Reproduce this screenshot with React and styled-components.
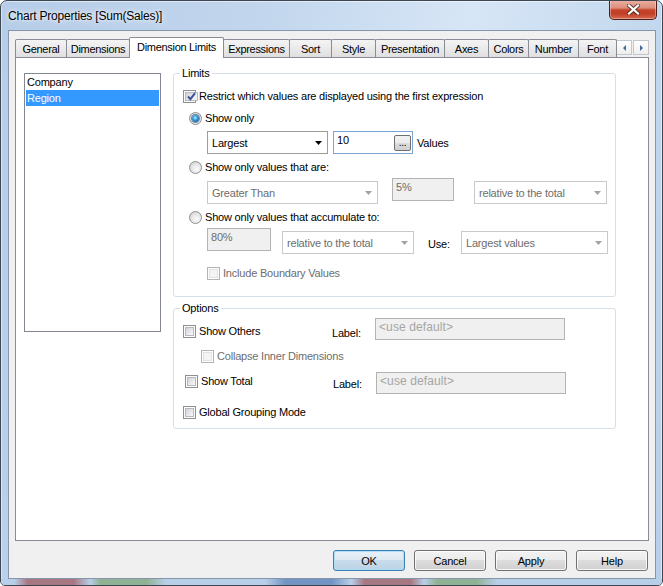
import React from "react";
import styled, { createGlobalStyle } from "styled-components";

const GlobalStyle = createGlobalStyle`
	* { box-sizing: border-box; }
	html, body { margin: 0; padding: 0; background: #ffffff; }
	body {
		font-family: "Liberation Sans", Arial, sans-serif;
		font-size: 11px;
		color: #000;
	}
`;

const TABS = [
	{ label: "General", width: 52 },
	{ label: "Dimensions", width: 64 },
	{ label: "Dimension Limits", width: 95, active: true },
	{ label: "Expressions", width: 67 },
	{ label: "Sort", width: 43 },
	{ label: "Style", width: 45 },
	{ label: "Presentation", width: 70 },
	{ label: "Axes", width: 45 },
	{ label: "Colors", width: 41 },
	{ label: "Number", width: 51 },
	{ label: "Font", width: 39 },
];

const DIMENSIONS = ["Company", "Region"];

const BUTTONS = ["OK", "Cancel", "Apply", "Help"];

function Check({ checked, disabled, children }) {
	return (
		<CheckLine $disabled={disabled}>
			<CheckBox $disabled={disabled}>
				<CheckInner $disabled={disabled}>
					{checked && (
						<svg width="11" height="11" viewBox="0 0 11 11">
							<path
								d="M2 5.5 L4.4 8.2 L9 2.2"
								fill="none"
								stroke="#3b4f9a"
								strokeWidth="1.9"
							/>
						</svg>
					)}
				</CheckInner>
			</CheckBox>
			<span>{children}</span>
		</CheckLine>
	);
}

function Radio({ selected, children }) {
	return (
		<RadioLine>
			<RadioCircle>{selected && <RadioDot />}</RadioCircle>
			<span>{children}</span>
		</RadioLine>
	);
}

function Combo({ value, width, disabled, drop = 3 }) {
	return (
		<ComboBox $w={width} $disabled={disabled} $drop={drop}>
			<span>{value}</span>
			<svg width="7" height="4" viewBox="0 0 7 4">
				<path d="M0 0 H7 L3.5 4 Z" fill={disabled ? "#a3a3a3" : "#000"} />
			</svg>
		</ComboBox>
	);
}

function LabelOption({ label, shift }) {
	return (
		<LabelledOption $shift={shift}>
			<CheckCell $shift={shift}>
				<Check>{label}</Check>
			</CheckCell>
			<FieldLabel $shift={shift}>Label:</FieldLabel>
			<DefaultBox>&lt;use default&gt;</DefaultBox>
		</LabelledOption>
	);
}

function CloseGlyph() {
	return (
		<svg width="13" height="11" viewBox="0 0 13 11">
			<path
				d="M2 1.5 L11 9.5 M11 1.5 L2 9.5"
				stroke="#43261f"
				strokeWidth="4"
				strokeLinecap="square"
				opacity="0.8"
			/>
			<path
				d="M2 1.5 L11 9.5 M11 1.5 L2 9.5"
				stroke="#ffffff"
				strokeWidth="2.2"
				strokeLinecap="square"
			/>
		</svg>
	);
}

function App() {
	return (
		<>
			<GlobalStyle />
			<Window>
				<TitleBar>
					<Title>Chart Properties [Sum(Sales)]</Title>
					<CloseButton>
						<CloseGlyph />
					</CloseButton>
				</TitleBar>

				<Client>
					<TabStrip>
						{TABS.map(tab => (
							<Tab key={tab.label} $w={tab.width} $active={tab.active}>
								{tab.label}
							</Tab>
						))}
						<ScrollArrows>
							<ArrowButton>
								<svg width="3" height="6" viewBox="0 0 3 6">
									<path d="M3 0 V6 L0 3 Z" fill="#41679b" />
								</svg>
							</ArrowButton>
							<ArrowButton>
								<svg width="3" height="6" viewBox="0 0 3 6">
									<path d="M0 0 V6 L3 3 Z" fill="#41679b" />
								</svg>
							</ArrowButton>
						</ScrollArrows>
					</TabStrip>

					<Panel>
						<DimensionList>
							{DIMENSIONS.map(name => (
								<ListItem key={name} $selected={name === "Region"}>
									{name}
								</ListItem>
							))}
						</DimensionList>

						<RightColumn>
							<LimitsGroup>
								<Legend>Limits</Legend>
								<LimitsBody>
									<Check checked>
										Restrict which values are displayed using the first expression
									</Check>
									<ChoiceList>
										<Choice>
											<Radio selected>Show only</Radio>
											<ChoiceControls>
												<Combo value="Largest" width={121} drop={2} />
												<ValueBox>
													<span>10</span>
													<EllipsisButton>...</EllipsisButton>
												</ValueBox>
												<Caption>Values</Caption>
											</ChoiceControls>
										</Choice>
										<Choice>
											<Radio>Show only values that are:</Radio>
											<ChoiceControls>
												<Combo value="Greater Than" width={171} disabled />
												<PercentBox $w={62}>5%</PercentBox>
												<Combo
													value="relative to the total"
													width={133}
													disabled
												/>
											</ChoiceControls>
										</Choice>
										<Choice>
											<Radio>Show only values that accumulate to:</Radio>
											<ChoiceControls>
												<PercentBox $w={64}>80%</PercentBox>
												<Combo
													value="relative to the total"
													width={132}
													disabled
												/>
												<UseLabel>Use:</UseLabel>
												<Combo value="Largest values" width={147} disabled />
											</ChoiceControls>
										</Choice>
										<BoundaryLine>
											<Check disabled>Include Boundary Values</Check>
										</BoundaryLine>
									</ChoiceList>
								</LimitsBody>
							</LimitsGroup>

							<OptionsGroup>
								<Legend>Options</Legend>
								<OptionsBody>
									<LabelOption label="Show Others" />
									<SubOption>
										<Check disabled>Collapse Inner Dimensions</Check>
									</SubOption>
									<LabelOption label="Show Total" shift />
									<GroupingOption>
										<Check>Global Grouping Mode</Check>
									</GroupingOption>
								</OptionsBody>
							</OptionsGroup>
						</RightColumn>
					</Panel>

					<ButtonRow>
						{BUTTONS.map(label => (
							<Button key={label} $default={label === "OK"}>
								{label}
							</Button>
						))}
					</ButtonRow>
				</Client>

				<BottomFrame />
			</Window>
		</>
	);
}

export default App;

const Window = styled.div`
	width: 663px;
	height: 586px;
	display: flex;
	flex-direction: column;
	border: 1px solid #3e4652;
	border-radius: 7px 7px 5px 5px;
	overflow: hidden;
	background: linear-gradient(
		100deg,
		#b6cde8 0%,
		#c2d6ed 35%,
		#d7e6f6 62%,
		#c6daef 82%,
		#b8cfe9 100%
	);
	box-shadow: inset 0 0 0 1px rgba(255, 255, 255, 0.5);
`;

const TitleBar = styled.div`
	height: 29px;
	flex: none;
	display: flex;
	align-items: center;
	padding-left: 7px;
`;

const Title = styled.div`
	font-size: 12px;
	letter-spacing: -0.2px;
	color: #000;
	text-shadow: 0 0 6px rgba(255, 255, 255, 0.9), 0 0 3px rgba(255, 255, 255, 0.8);
`;

const CloseButton = styled.div`
	align-self: flex-start;
	margin: -1px 5px 0 auto;
	width: 48px;
	height: 20px;
	border: 1px solid #4d1f18;
	border-top: none;
	border-radius: 0 0 5px 5px;
	background: linear-gradient(
		#ebb3a6 0%,
		#de8d7a 42%,
		#c7442b 52%,
		#c03f27 72%,
		#d9694e 100%
	);
	box-shadow: inset 0 0 0 1px rgba(255, 255, 255, 0.35);
	display: flex;
	align-items: center;
	justify-content: center;
`;

const Client = styled.div`
	flex: none;
	height: 549px;
	margin: 0 6px 0 7px;
	border: 1px solid #8596aa;
	background: #f0f0f0;
	display: flex;
	flex-direction: column;
`;

const TabStrip = styled.div`
	height: 20px;
	margin: 6px 6px 0 6px;
	display: flex;
	align-items: flex-end;
`;

const Tab = styled.div`
	width: ${p => p.$w}px;
	height: ${p => (p.$active ? 21 : 18)}px;
	margin-right: -1px;
	margin-bottom: ${p => (p.$active ? -1 : 0)}px;
	position: relative;
	z-index: ${p => (p.$active ? 2 : 1)};
	border: 1px solid #898c95;
	border-bottom: none;
	border-radius: 2px 2px 0 0;
	background: ${p =>
		p.$active ? "#ffffff" : "linear-gradient(#f4f4f4, #e9e9e9 55%, #dfdfdf)"};
	display: flex;
	align-items: center;
	justify-content: center;
	padding-bottom: ${p => (p.$active ? 3 : 0)}px;
	letter-spacing: -0.3px;
	white-space: nowrap;
`;

const ScrollArrows = styled.div`
	margin: 0 0 2px auto;
	display: flex;
	gap: 1px;
`;

const ArrowButton = styled.div`
	width: 16px;
	height: 15px;
	border: 1px solid #c3c6cc;
	background: linear-gradient(#ffffff, #eeeeee);
	display: flex;
	align-items: center;
	justify-content: center;
`;

const Panel = styled.div`
	height: 484px;
	margin: 0 6px;
	border: 1px solid #898c95;
	background: #ffffff;
	display: flex;
	align-items: flex-start;
	gap: 12px;
	padding: 9px 0 0 8px;
`;

const DimensionList = styled.div`
	width: 137px;
	height: 259px;
	margin-top: 6px;
	border: 1px solid #828790;
	padding: 0 1px;
`;

const ListItem = styled.div`
	height: 16px;
	line-height: 16px;
	padding-left: 1px;
	letter-spacing: -0.2px;
	color: ${p => (p.$selected ? "#ffffff" : "#000000")};
	background: ${p => (p.$selected ? "#3399ff" : "transparent")};
`;

const RightColumn = styled.div`
	width: 443px;
	display: flex;
	flex-direction: column;
	gap: 5px;
`;

const GroupBox = styled.fieldset`
	margin: 0;
	padding: 0;
	min-width: 0;
	border: 1px solid #d5dfe5;
	border-radius: 3px;
`;

const LimitsGroup = styled(GroupBox)`
	height: 230px;
`;

const OptionsGroup = styled(GroupBox)`
	height: 127px;
`;

const Legend = styled.legend`
	margin-left: 6px;
	padding: 0 2px;
	line-height: 13px;
	letter-spacing: -0.2px;
`;

const LimitsBody = styled.div`
	padding: 10px 0 0 9px;
	display: flex;
	flex-direction: column;
	align-items: flex-start;
	gap: 9px;
`;

const ChoiceList = styled.div`
	margin-left: 6px;
	display: flex;
	flex-direction: column;
	align-items: flex-start;
	gap: 7px;
`;

const ChoiceControls = styled.div`
	height: 26px;
	margin-left: 18px;
	display: flex;
	align-items: flex-start;
`;

const Choice = styled.div`
	display: flex;
	flex-direction: column;
	align-items: flex-start;
	gap: 4px;

	&:first-child ${ChoiceControls} {
		height: 25px;
	}
`;

const BoundaryLine = styled.div`
	margin: 6px 0 0 18px;
`;

const CheckLine = styled.div`
	height: 13px;
	display: flex;
	align-items: center;
	gap: 3px;
	line-height: 13px;
	letter-spacing: -0.2px;
	white-space: nowrap;
	color: ${p => (p.$disabled ? "#6d6d6d" : "#000")};
`;

const CheckBox = styled.span`
	width: 13px;
	height: 13px;
	flex: none;
	border: 1px solid ${p => (p.$disabled ? "#b4b4b4" : "#8e8f8f")};
	background: #fdfdfd;
	padding: 1px;
	display: flex;
`;

const CheckInner = styled.span`
	flex: 1;
	border: 1px solid ${p => (p.$disabled ? "#e2e2e2" : "#b6b9bd")};
	background: ${p =>
		p.$disabled
			? "#f4f4f4"
			: "linear-gradient(135deg, #d0d3d8 0%, #e6e7e9 50%, #f8f8f8 100%)"};
	display: flex;
	align-items: center;
	justify-content: center;

	svg {
		flex: none;
	}
`;

const RadioLine = styled.div`
	height: 13px;
	display: flex;
	align-items: center;
	gap: 3px;
	line-height: 13px;
	letter-spacing: -0.2px;
	white-space: nowrap;
`;

const RadioCircle = styled.span`
	width: 13px;
	height: 13px;
	flex: none;
	border-radius: 50%;
	border: 1px solid #8e8f8f;
	background: radial-gradient(
		circle at 60% 65%,
		#fbfbfb 0%,
		#e8e8e8 45%,
		#cacaca 100%
	);
	display: flex;
	align-items: center;
	justify-content: center;
`;

const RadioDot = styled.span`
	width: 7px;
	height: 7px;
	border-radius: 50%;
	background: radial-gradient(
		circle at 45% 40%,
		#c4f0ff 0%,
		#3aa8e4 35%,
		#17579a 80%,
		#153c6b 100%
	);
	box-shadow: 0 0 0 1px rgba(30, 70, 120, 0.6);
`;

const ComboBox = styled.div`
	width: ${p => p.$w}px;
	height: 23px;
	flex: none;
	margin-top: ${p => p.$drop}px;
	border: 1px solid ${p => (p.$disabled ? "#c9c9c9" : "#9d9d9d")};
	background: #ffffff;
	display: flex;
	align-items: center;
	justify-content: space-between;
	padding: 0 5px 0 4px;
	color: ${p => (p.$disabled ? "#6d6d6d" : "#000")};
	letter-spacing: -0.2px;
	white-space: nowrap;
`;

const TextField = styled.div`
	height: 23px;
	flex: none;
	border: 1px solid #b3b3b3;
	background: #f0f0f0;
	color: #6d6d6d;
	padding: 2px 1px 0 3px;
	line-height: 13px;
	letter-spacing: -0.2px;
	white-space: nowrap;
`;

const ValueBox = styled(TextField)`
	width: 80px;
	margin: 2px 0 0 5px;
	border-color: #7ea6d3;
	background: #ffffff;
	color: #000;
	display: flex;
	align-items: flex-start;
	justify-content: space-between;
`;

const PercentBox = styled(TextField)`
	width: ${p => p.$w}px;

	${ComboBox} + & {
		margin-left: 14px;
	}

	& + ${ComboBox} {
		margin-left: 11px;
	}

	${ComboBox} + & + ${ComboBox} {
		margin-left: 20px;
	}
`;

const DefaultBox = styled(TextField)`
	width: 190px;
	height: 22px;
	color: #a5a5a5;
	font-size: 12px;
	letter-spacing: 0.1px;
`;

const EllipsisButton = styled.div`
	width: 17px;
	height: 16px;
	margin-top: 1px;
	border: 1px solid #707070;
	border-radius: 2px;
	background: linear-gradient(#f2f2f2 0%, #ebebeb 50%, #dddddd 50%, #cfcfcf 100%);
	display: flex;
	align-items: flex-end;
	justify-content: center;
	padding-bottom: 2px;
	font-size: 10px;
	line-height: 10px;
	color: #000;
`;

const Caption = styled.span`
	margin: 8px 0 0 4px;
	line-height: 13px;
	letter-spacing: -0.2px;
`;

const UseLabel = styled.span`
	width: 33px;
	margin: 10px 0 0 14px;
	line-height: 13px;
	letter-spacing: -0.2px;
`;

const OptionsBody = styled.div`
	padding: 3px 0 0 9px;
	display: flex;
	flex-direction: column;
	align-items: flex-start;
`;

const LabelledOption = styled.div`
	height: 22px;
	margin-left: ${p => (p.$shift ? 2 : 0)}px;
	display: grid;
	grid-template-columns: ${p => (p.$shift ? 148 : 149)}px 43px 190px;
	align-items: start;

	& + * {
		margin-top: 10px;
	}

	* + & {
		margin-top: 9px;
	}
`;

const CheckCell = styled.div`
	margin-top: ${p => (p.$shift ? 3 : 7)}px;
`;

const FieldLabel = styled.div`
	margin-top: ${p => (p.$shift ? 6 : 9)}px;
	line-height: 13px;
	letter-spacing: -0.2px;
`;

const SubOption = styled.div`
	margin-left: 18px;
`;

const GroupingOption = styled.div`
	margin-top: 12px;
`;

const ButtonRow = styled.div`
	margin-top: 9px;
	padding-right: 7px;
	display: flex;
	justify-content: flex-end;
	gap: 9px;
`;

const Button = styled.div`
	width: 72px;
	height: 21px;
	border: 1px solid ${p => (p.$default ? "#3c7fb1" : "#707070")};
	border-radius: 3px;
	background: ${p =>
		p.$default
			? "linear-gradient(#e8f1f8 0%, #dbe8f2 50%, #c9dceb 50%, #bcd3e5 100%)"
			: "linear-gradient(#f2f2f2 0%, #ebebeb 50%, #dddddd 50%, #cfcfcf 100%)"};
	box-shadow: inset 0 0 0 1px
		${p => (p.$default ? "rgba(170, 220, 250, 0.9)" : "rgba(255, 255, 255, 0.8)")};
	display: flex;
	align-items: center;
	justify-content: center;
	letter-spacing: -0.2px;
`;

const BottomFrame = styled.div`
	flex: 1;
	background: linear-gradient(
		90deg,
		#b8cfe9 0%,
		#b8cfe9 2%,
		#a87882 4%,
		#a87882 11%,
		#b8cfe9 13.5%,
		#90b294 15%,
		#90b294 22%,
		#b8cfe9 25%,
		#b8cfe9 40%,
		#7194c2 43%,
		#7194c2 50%,
		#b8cfe9 53%,
		#a87882 55%,
		#a87882 62%,
		#b8cfe9 64%,
		#90b294 66%,
		#90b294 72%,
		#b8cfe9 75%,
		#b8cfe9 100%
	);
`;
